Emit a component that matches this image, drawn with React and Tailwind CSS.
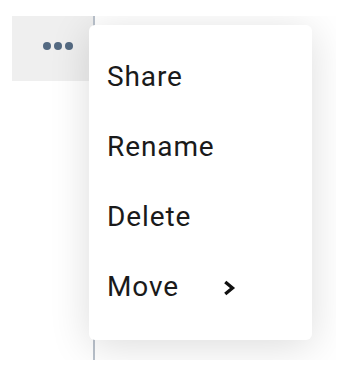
import React from "react";

export default function App() {
  const items = ["Share", "Rename", "Delete", "Move"];
  return (
    <div className="w-[360px] h-[378px] bg-white pt-[16px] pl-[12px]" style={{ fontFamily: "Roboto, 'Noto Sans', sans-serif" }}>
      <div className="relative w-[324px] h-[344px] overflow-hidden flex">
        <div className="w-[81px] h-[65px] bg-[#efefef] flex items-start pt-[26px] pl-[31px] gap-[3px]">
          <span className="w-[8px] h-[8px] rounded-full bg-[#546a82]" />
          <span className="w-[8px] h-[8px] rounded-full bg-[#546a82]" />
          <span className="w-[8px] h-[8px] rounded-full bg-[#546a82]" />
        </div>
        <div className="w-[2px] h-full bg-[#b9c1cb]" />
        <div className="absolute left-[77px] top-[9px] w-[223px] h-[315px] bg-white rounded-[6px] shadow-[0_6px_40px_rgba(0,0,0,0.14)] py-[17px]">
          {items.map((t) => (
            <div key={t} className="relative h-[70px] flex items-center pl-[18px] text-[28px] tracking-[0.9px] text-[#1a1a1a]">
              <span>{t}</span>
              {t === "Move" && (
                <svg className="absolute left-[134px] top-[28px]" width="13" height="16" viewBox="0 0 13 16">
                  <polyline points="3.5,3 9.5,8 3.5,13" fill="none" stroke="#111" strokeWidth="3.3" strokeLinecap="square" strokeLinejoin="miter" />
                </svg>
              )}
            </div>
          ))}
        </div>
      </div>
    </div>
  );
}
